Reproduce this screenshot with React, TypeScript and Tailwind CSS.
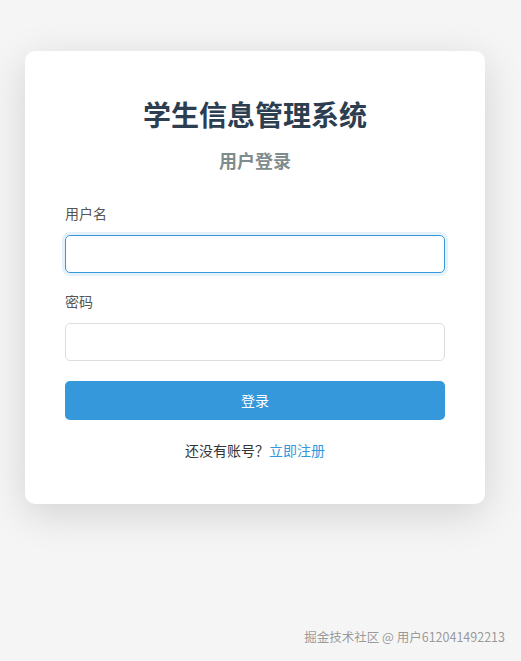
export default function App() {
  return (
    <div
      className="relative min-h-screen bg-[#f5f5f5] pt-[51px] px-[25px]"
      style={{ fontFamily: '"Noto Sans CJK SC", "Noto Sans", sans-serif' }}
    >
      <div className="w-[460px] rounded-[10px] bg-white px-[40px] pt-[42px] pb-[44px] shadow-[0_10px_40px_rgba(0,0,0,0.14)]">
        <h1 className="text-center text-[28px] leading-[42px] font-bold text-[#2c3e50]">
          学生信息管理系统
        </h1>
        <h2 className="mt-[12px] text-center text-[18px] leading-[26px] font-bold text-[#7f8c8d]">
          用户登录
        </h2>

        <form className="mt-[30px]" onSubmit={(e) => e.preventDefault()}>
          <div className="mb-[18px]">
            <label className="block text-[14px] leading-[20px] text-[#555] mb-[12px]">用户名</label>
            <input
              type="text"
              className="block h-[38px] w-full rounded-[5px] border border-[#3498db] px-3 text-[14px] outline-none shadow-[0_0_0_3px_rgba(52,152,219,0.12)]"
            />
          </div>
          <div className="mb-[20px]">
            <label className="block text-[14px] leading-[20px] text-[#555] mb-[12px]">密码</label>
            <input
              type="password"
              className="block h-[38px] w-full rounded-[5px] border border-[#ddd] px-3 text-[14px] outline-none"
            />
          </div>
          <button
            type="submit"
            className="block h-[39px] w-full rounded-[5px] bg-[#3498db] text-[14px] text-white"
          >
            登录
          </button>
        </form>

        <div className="mt-[20px] text-center text-[14px] leading-[20px] text-[#333]">
          还没有账号？<a href="#" className="text-[#3498db]">立即注册</a>
        </div>
      </div>

      <div className="absolute right-[16px] bottom-[14px] text-[12.5px] text-[#999] [text-shadow:0_0_2px_rgba(255,255,255,0.8)]">
        掘金技术社区 @ 用户612041492213
      </div>
    </div>
  );
}
